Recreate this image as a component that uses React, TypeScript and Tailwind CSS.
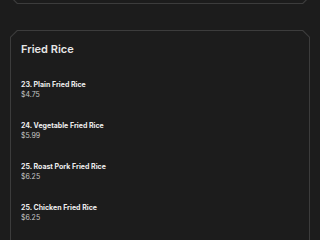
import React from "react";

const items = [
  { name: "23. Plain Fried Rice", price: "$4.75" },
  { name: "24. Vegetable Fried Rice", price: "$5.99" },
  { name: "25. Roast Pork Fried Rice", price: "$6.25" },
  { name: "25. Chicken Fried Rice", price: "$6.25" },
];

function Card({ children, className = "" }: { children?: React.ReactNode; className?: string }) {
  return (
    <div
      className={
        "bg-[#3c3c3c] p-px [clip-path:polygon(7px_0,calc(100%_-_7px)_0,100%_7px,100%_calc(100%_-_7px),calc(100%_-_7px)_100%,7px_100%,0_calc(100%_-_7px),0_7px)] " +
        className
      }
    >
      <div className="bg-[#1c1c1c] h-full [clip-path:polygon(6.6px_0,calc(100%_-_6.6px)_0,100%_6.6px,100%_calc(100%_-_6.6px),calc(100%_-_6.6px)_100%,6.6px_100%,0_calc(100%_-_6.6px),0_6.6px)]">
        {children}
      </div>
    </div>
  );
}

export default function App() {
  return (
    <div
      className="w-[320px] h-[240px] overflow-hidden bg-[#1c1c1c] px-[10px]"
      style={{ fontFamily: "Inter, 'Open Sans', sans-serif" }}
    >
      <Card className="h-[40px] -mt-[36px]" />
      <Card className="mt-[26px] h-[300px]">
        <div className="pl-[10px] pt-[10px]">
          <h2 className="text-[11px] leading-[16px] font-semibold text-[#e6e6e6]">Fried Rice</h2>
          <div className="mt-[23px] flex flex-col gap-[20.5px]">
            {items.map((it) => (
              <div key={it.name} className="flex flex-col">
                <div className="text-[7px] leading-[10px] font-bold text-[#eeeeee]">{it.name}</div>
                <div className="text-[7px] leading-[10.5px] text-[#c8c8c8]">{it.price}</div>
              </div>
            ))}
          </div>
        </div>
      </Card>
    </div>
  );
}
